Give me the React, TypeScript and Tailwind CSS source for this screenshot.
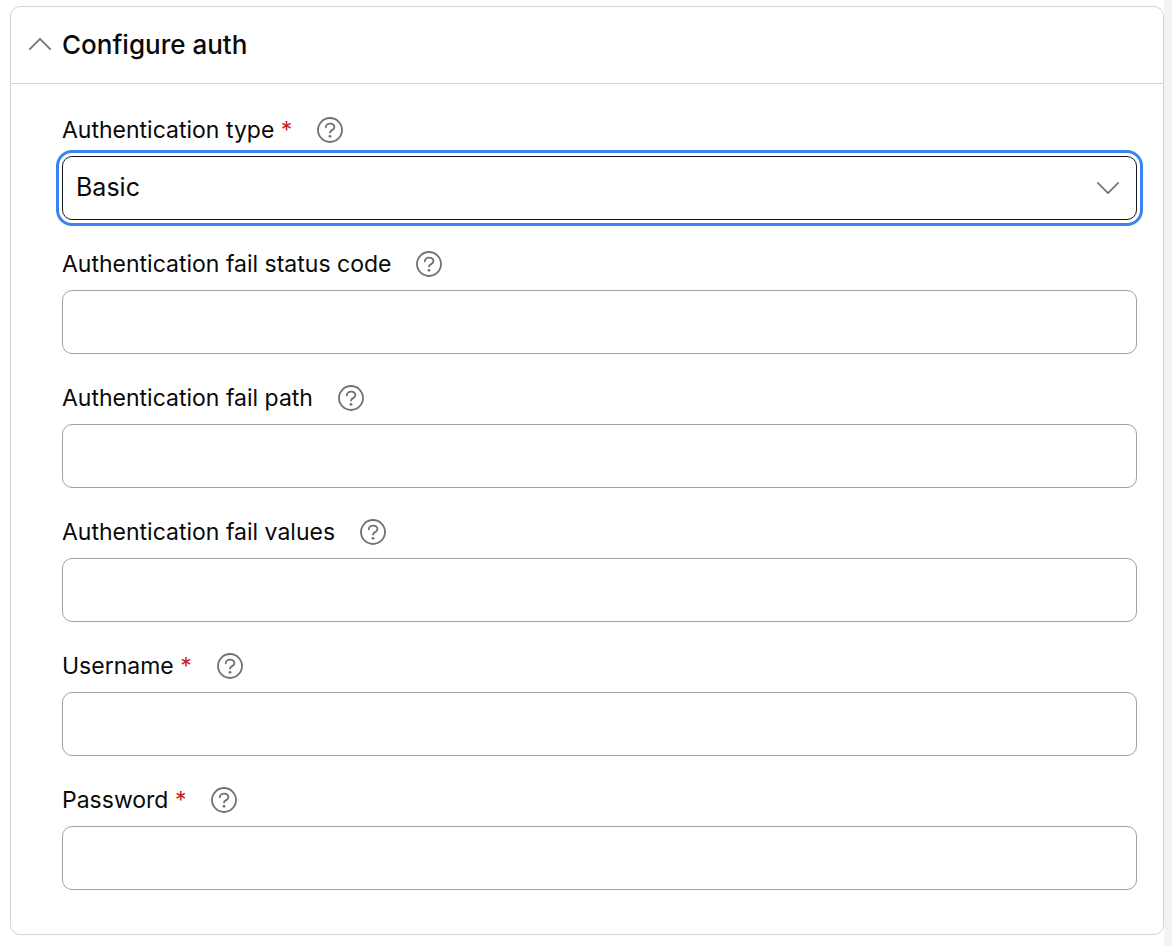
import { useState } from 'react';
import clsx from 'clsx';

interface Field {
  id: string;
  label: string;
  required?: boolean;
  type?: string;
}

const FIELDS: Field[] = [
  { id: 'fail-status-code', label: 'Authentication fail status code' },
  { id: 'fail-path', label: 'Authentication fail path' },
  { id: 'fail-values', label: 'Authentication fail values' },
  { id: 'username', label: 'Username', required: true },
  { id: 'password', label: 'Password', required: true, type: 'password' },
];

function Chevron({ className }: { className?: string }) {
  return (
    <svg
      viewBox="0 0 24 14"
      fill="none"
      stroke="currentColor"
      strokeWidth="1.7"
      strokeLinecap="round"
      strokeLinejoin="round"
      className={clsx('h-[14px] w-6 text-[#71717a]', className)}
      aria-hidden="true"
    >
      <path d="M1.8 12.2 12 1.9l10.2 10.3" />
    </svg>
  );
}

function HelpIcon() {
  return (
    <svg viewBox="0 0 26 26" fill="none" stroke="#71717a" strokeWidth="1.8" strokeLinecap="round" className="size-[26px]" aria-hidden="true">
      <circle cx="13" cy="13" r="12" />
      <path d="M8.8 10.3C8.8 7.9 10.7 6.7 13 6.7s4.4 1.3 4.4 3.6c0 2.9-4.4 2.7-4.4 5.3" />
      <circle cx="13" cy="19.3" r="1.4" fill="#71717a" stroke="none" />
    </svg>
  );
}

function FieldLabel({ id, label, required }: Field) {
  return (
    <div className="flex h-[26px] items-center gap-[25px]">
      <label htmlFor={id} className="text-[23px] leading-[26px]">
        {label}
        {required && <span className="text-[#c81e1e]"> *</span>}
      </label>
      <button type="button" aria-label={`Help for ${label}`}>
        <HelpIcon />
      </button>
    </div>
  );
}

export default function App() {
  const [open, setOpen] = useState(true);
  const [authType, setAuthType] = useState('Basic');

  return (
    <div className="flex min-h-screen bg-white font-['Inter',sans-serif] text-[#0a0a0a]">
      <main className="min-w-0 flex-1 pt-[6px] pb-[11px] pl-[10px]">
        <section className="rounded-[10px] border border-[#d4d4d4]">
          <h2>
            <button
              type="button"
              aria-expanded={open}
              onClick={() => setOpen(!open)}
              className="flex h-[76px] w-full items-center gap-[10px] pb-[2px] pl-[17px] text-[26px] font-medium"
            >
              <Chevron className={open ? '' : 'rotate-180'} />
              Configure auth
            </button>
          </h2>

          {open && (
            <form className="flex flex-col gap-[31px] border-t border-[#d4d4d4] pt-[33px] pr-[26px] pb-11 pl-[51px]">
              <div className="flex flex-col gap-[13px]">
                <FieldLabel id="auth-type" label="Authentication type" required />
                <div className="relative">
                  <select
                    id="auth-type"
                    value={authType}
                    onChange={(e) => setAuthType(e.target.value)}
                    className="block h-16 w-full appearance-none rounded-[10px] border border-[#18181b] bg-white px-[13px] text-[25px] outline-[3px] outline-offset-[3px] outline-[#3b82f6]"
                  >
                    <option>Basic</option>
                  </select>
                  <Chevron className="pointer-events-none absolute top-[25px] right-[17px] rotate-180" />
                </div>
              </div>

              {FIELDS.map((field) => (
                <div key={field.id} className="flex flex-col gap-[13px]">
                  <FieldLabel {...field} />
                  <input
                    id={field.id}
                    type={field.type ?? 'text'}
                    autoComplete="off"
                    className="block h-16 w-full rounded-[10px] border border-[#a1a1aa] bg-white px-[13px] text-[25px]"
                  />
                </div>
              ))}
            </form>
          )}
        </section>
      </main>
      <div className="w-2 shrink-0 bg-[#f3f3f3]" />
    </div>
  );
}
